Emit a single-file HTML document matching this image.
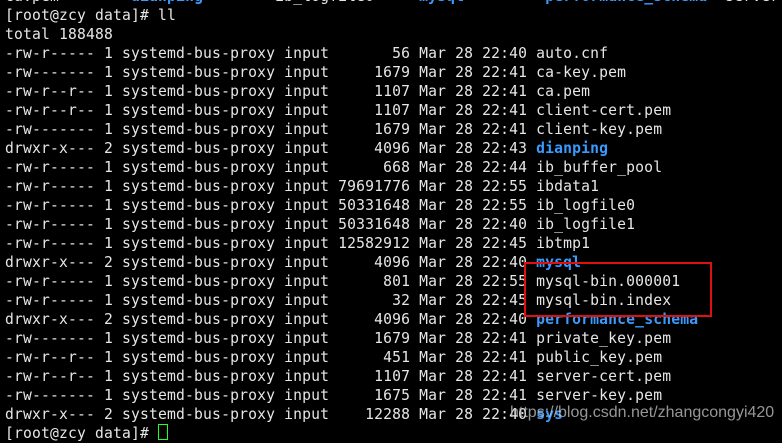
<!DOCTYPE html><html><head><meta charset="utf-8"><style>
html,body{margin:0;padding:0;background:#000;width:782px;height:432px;overflow:hidden}
pre{position:absolute;left:5px;top:-13px;margin:0;font-family:"DejaVu Sans Mono","Liberation Mono",monospace;font-size:14.7px;line-height:19px;color:#e6e6e6;letter-spacing:0.16px}
b{color:#3a9bff;font-weight:bold}
.box{position:absolute;left:524px;top:262px;width:184px;height:51px;border:2px solid #e01010}
.wm{position:absolute;left:510px;top:404px;font-family:"Liberation Sans",sans-serif;font-size:16px;color:rgba(200,200,200,0.75)}
.cur{display:inline-block;width:8px;height:14px;border:1px solid #2f2;vertical-align:-2px}
</style></head><body><pre>ca.pem        <b>dianping</b>        ib_logfile0     <b>mysql</b>         <b>performance_schema</b>  server-c
[root@zcy data]# ll
total 188488
-rw-r----- 1 systemd-bus-proxy input       56 Mar 28 22:40 auto.cnf
-rw------- 1 systemd-bus-proxy input     1679 Mar 28 22:41 ca-key.pem
-rw-r--r-- 1 systemd-bus-proxy input     1107 Mar 28 22:41 ca.pem
-rw-r--r-- 1 systemd-bus-proxy input     1107 Mar 28 22:41 client-cert.pem
-rw------- 1 systemd-bus-proxy input     1679 Mar 28 22:41 client-key.pem
drwxr-x--- 2 systemd-bus-proxy input     4096 Mar 28 22:43 <b>dianping</b>
-rw-r----- 1 systemd-bus-proxy input      668 Mar 28 22:44 ib_buffer_pool
-rw-r----- 1 systemd-bus-proxy input 79691776 Mar 28 22:55 ibdata1
-rw-r----- 1 systemd-bus-proxy input 50331648 Mar 28 22:55 ib_logfile0
-rw-r----- 1 systemd-bus-proxy input 50331648 Mar 28 22:40 ib_logfile1
-rw-r----- 1 systemd-bus-proxy input 12582912 Mar 28 22:45 ibtmp1
drwxr-x--- 2 systemd-bus-proxy input     4096 Mar 28 22:40 <b>mysql</b>
-rw-r----- 1 systemd-bus-proxy input      801 Mar 28 22:55 mysql-bin.000001
-rw-r----- 1 systemd-bus-proxy input       32 Mar 28 22:45 mysql-bin.index
drwxr-x--- 2 systemd-bus-proxy input     4096 Mar 28 22:40 <b>performance_schema</b>
-rw------- 1 systemd-bus-proxy input     1679 Mar 28 22:41 private_key.pem
-rw-r--r-- 1 systemd-bus-proxy input      451 Mar 28 22:41 public_key.pem
-rw-r--r-- 1 systemd-bus-proxy input     1107 Mar 28 22:41 server-cert.pem
-rw------- 1 systemd-bus-proxy input     1675 Mar 28 22:41 server-key.pem
drwxr-x--- 2 systemd-bus-proxy input    12288 Mar 28 22:40 <b>sys</b>
[root@zcy data]# <span class="cur"></span></pre>
<div class="box"></div>
<div class="wm">https://blog.csdn.net/zhangcongyi420</div>
</body></html>
